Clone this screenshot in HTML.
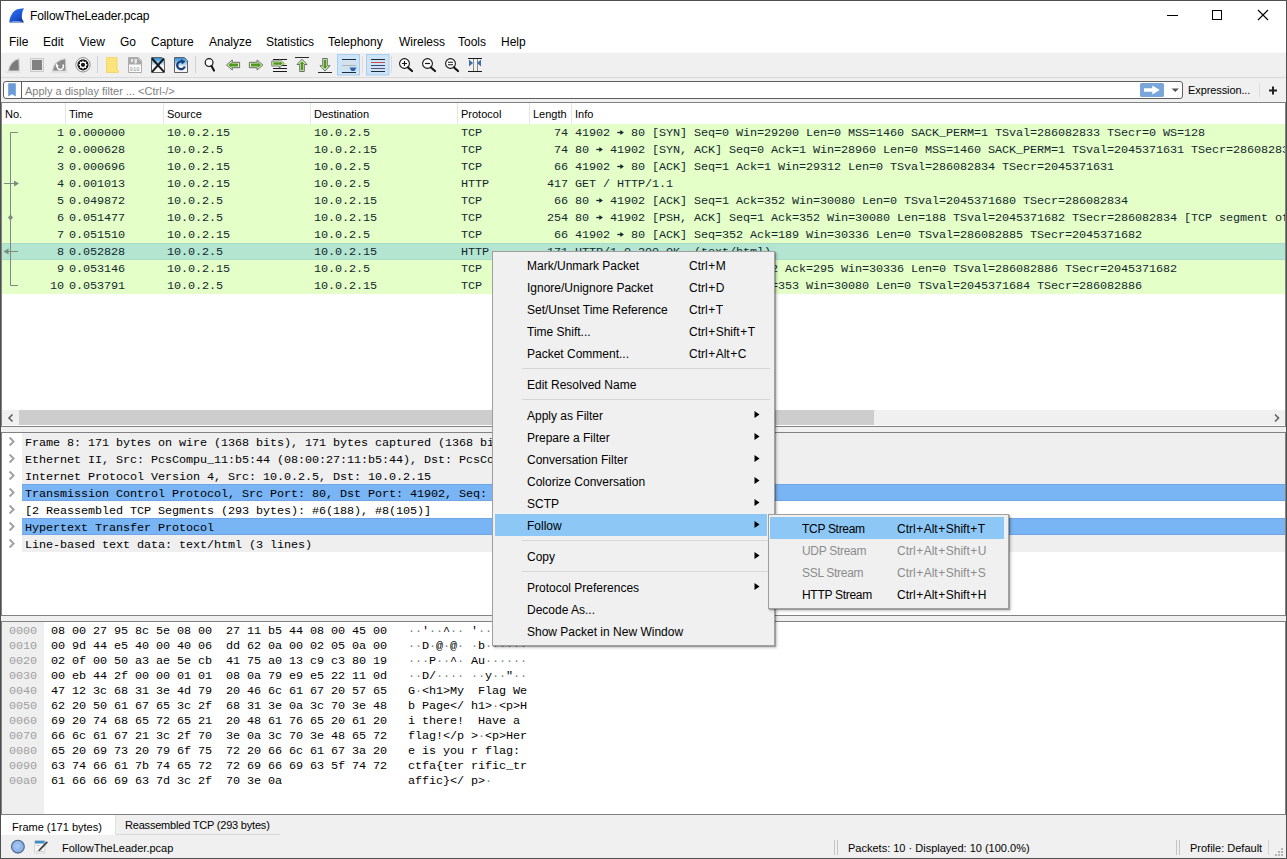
<!DOCTYPE html>
<html><head><meta charset="utf-8">
<style>
*{margin:0;padding:0;box-sizing:border-box}
html,body{width:1287px;height:859px;overflow:hidden;background:#fff}
body{position:relative;font-family:"Liberation Sans",sans-serif;font-size:12px;color:#000}
.a{position:absolute}
.t{position:absolute;white-space:pre;line-height:14px}
.s{font-size:11px}
.m{font-family:"Liberation Mono",monospace;font-size:11.8px;letter-spacing:-0.08px}
.row{position:absolute;left:2px;width:1283px;height:17px;overflow:hidden;background:#e4ffc7;color:#12272e}
.row span{position:absolute;top:1px;line-height:17px;white-space:pre;font-family:"Liberation Mono",monospace;font-size:11.8px;letter-spacing:-0.08px}
.hd{position:absolute;top:103px;height:21px;border-left:1px solid #e5e5e5}
.drow{position:absolute;left:22px;width:1263px;height:17px;background:#efefef;color:#000;font-family:"Liberation Mono",monospace;font-size:11.8px;letter-spacing:-0.08px;line-height:17px;white-space:pre;padding:2px 0 0 3px}
.chev{position:absolute;left:9px}
i.p{font-style:normal;margin:0 0.5px}
b.d{font-weight:normal;color:#808080}
svg.ar{vertical-align:0.5px}
.mi{position:absolute;left:495px;width:272px;height:22px;line-height:22px}
.mi span{position:absolute;white-space:pre}
</style></head><body>

<div class="a" style="left:0;top:0;width:1287px;height:52px;background:#fff"></div>
<div class="t" style="left:30px;top:9px;letter-spacing:-0.1px">FollowTheLeader.pcap</div>
<div class="t" style="left:9px;top:35px">File</div>
<div class="t" style="left:43px;top:35px">Edit</div>
<div class="t" style="left:79px;top:35px">View</div>
<div class="t" style="left:120px;top:35px">Go</div>
<div class="t" style="left:151px;top:35px">Capture</div>
<div class="t" style="left:209px;top:35px">Analyze</div>
<div class="t" style="left:266px;top:35px">Statistics</div>
<div class="t" style="left:328px;top:35px">Telephony</div>
<div class="t" style="left:399px;top:35px">Wireless</div>
<div class="t" style="left:458px;top:35px">Tools</div>
<div class="t" style="left:501px;top:35px">Help</div>
<div class="a" style="left:0;top:52px;width:1287px;height:50px;background:#f0f0f0"></div>
<div class="a" style="left:3px;top:81px;width:1180px;height:18px;background:#fff;border:1px solid #5f5f5f;border-radius:3px"></div>
<div class="t s" style="left:25px;top:84px;color:#7f7f7f">Apply a display filter ... &lt;Ctrl-/&gt;</div>
<div class="t s" style="left:1188px;top:83px;letter-spacing:-0.1px">Expression...</div>
<svg class="a" style="left:0;top:0" width="1287" height="110" viewBox="0 0 1287 110">
<defs>
<linearGradient id="gb" x1="0" y1="0" x2="0" y2="1"><stop offset="0" stop-color="#2f8fd8"/><stop offset="1" stop-color="#d8ecf8"/></linearGradient>
<linearGradient id="fin" x1="0.2" y1="0" x2="0.9" y2="1"><stop offset="0" stop-color="#2f74f0"/><stop offset="0.6" stop-color="#1a52d0"/><stop offset="1" stop-color="#0c2f88"/></linearGradient>
</defs>
<!-- title icon: shark fin blue -->
<path d="M9.3 22.5 C9.8 15.5 13.5 10 18.5 9 L24 8.2 C22.2 11 21.6 15.5 21.9 18.5 L24 22.5 Z" fill="url(#fin)"/>
<path d="M9.5 22.5 C12 20.6 19 20.4 23.6 22.5 Z" fill="#8eaee6" opacity="0.85"/>
<!-- window controls -->
<line x1="1167" y1="15.5" x2="1178" y2="15.5" stroke="#000" stroke-width="1"/>
<rect x="1212.5" y="10.5" width="9" height="9" fill="none" stroke="#000" stroke-width="1"/>
<path d="M1258 10 L1268 20 M1268 10 L1258 20" stroke="#000" stroke-width="1.1"/>
<!-- toolbar lines -->
<line x1="0" y1="52.5" x2="1287" y2="52.5" stroke="#fafafa"/>
<line x1="0" y1="77.5" x2="1287" y2="77.5" stroke="#d9d9d9"/>
<!-- 1 shark fin gray -->
<path d="M8.5 71 C9 65 13 60 19 58.8 L19.3 71 Z" fill="#7b7b7b" stroke="#d3d3d3" stroke-width="1.1" stroke-linejoin="round"/>
<line x1="6" y1="72.2" x2="21" y2="72.2" stroke="#dedede" stroke-width="1"/>
<!-- 2 stop -->
<rect x="30.5" y="58.5" width="13" height="13" fill="#e9e9e9" stroke="#cbcbcb"/>
<rect x="32" y="60" width="10" height="10" fill="#828282"/>
<!-- 3 restart -->
<path d="M52.5 71 C53 65 57 60 65.5 58.8 L66 71 Z" fill="#8a8a8a" stroke="#d3d3d3" stroke-width="1.1" stroke-linejoin="round"/>
<line x1="50" y1="72.2" x2="68" y2="72.2" stroke="#dedede" stroke-width="1"/>
<path d="M62.8 64.5 A3.2 3.2 0 1 1 57.2 65.5" fill="none" stroke="#fff" stroke-width="1.5"/>
<path d="M56 63 L58.8 66 L55.8 67.2 Z" fill="#fff"/>
<!-- 4 options gear -->
<circle cx="83" cy="64.8" r="7.2" fill="#fff" stroke="#8c8c8c" stroke-width="1"/>
<circle cx="83" cy="64.8" r="5.6" fill="#151515"/>
<path d="M83 60.2 L84.1 61.9 L86.3 61.5 L85.9 63.7 L87.6 64.8 L85.9 65.9 L86.3 68.1 L84.1 67.7 L83 69.4 L81.9 67.7 L79.7 68.1 L80.1 65.9 L78.4 64.8 L80.1 63.7 L79.7 61.5 L81.9 61.9 Z" fill="#fff"/>
<circle cx="83" cy="64.8" r="2.1" fill="#151515"/>
<!-- sep -->
<line x1="97.5" y1="56" x2="97.5" y2="73" stroke="#cfd0dc"/>
<!-- 5 folder -->
<path d="M106.5 57.5 H117 V69 L118.5 71 V72.5 H106.5 Z" fill="#fce37a" stroke="#f2d35a" stroke-width="0.8"/>
<!-- 6 save -->
<path d="M128.5 57.5 H138.5 L141.5 60.5 V72.5 H128.5 Z" fill="#fdfdfd" stroke="#acacac"/>
<path d="M129 58 H138 L141 61 V64.5 H129 Z" fill="#a9a9a9"/>
<path d="M131 59 H133 V62 H131 Z M134.5 59 H137 V62.5 L136 63.5 H134.5 Z" fill="#e8e8e8"/>
<text x="129.6" y="70.6" font-family="Liberation Mono" font-size="5.6" fill="#8f8f8f">010</text>
<!-- 7 close -->
<path d="M151.5 57.5 H162 L164.5 60 V72.5 H151.5 Z" fill="#f7f7f7" stroke="#606060"/>
<path d="M152 58 H162 L164 60 V65 H152 Z" fill="url(#gb)"/>
<path d="M152.5 59 L163.5 71.3 M163.5 59 L152.5 71.3" stroke="#161616" stroke-width="1.9" stroke-linecap="round"/>
<!-- 8 reload -->
<path d="M174.5 57.5 H184.5 L187.5 60.5 V72.5 H174.5 Z" fill="#f7f7f7" stroke="#606060"/>
<path d="M175 58 H184.5 L187 60.5 V66 H175 Z" fill="url(#gb)"/>
<path d="M184.8 66.5 A3.9 3.9 0 1 1 182.5 61.6" fill="none" stroke="#17407e" stroke-width="2.3"/>
<path d="M180.8 59.3 L185.5 61.2 L182 64.6 Z" fill="#17407e"/>
<!-- sep -->
<line x1="195.5" y1="56" x2="195.5" y2="73" stroke="#cfd0dc"/>
<!-- 9 find -->
<circle cx="209.1" cy="62.6" r="3.9" fill="#fff" stroke="#151515" stroke-width="1.2"/>
<path d="M211.5 66 L214 70.6" stroke="#151515" stroke-width="2.1" stroke-linecap="round"/>
<!-- 10 prev -->
<path d="M226.5 65 L232.3 60 V62.3 H239.6 V67.7 H232.3 V70 Z" fill="#e0f7c8" stroke="#5c5c5c" stroke-width="0.9" stroke-linejoin="round"/>
<path d="M228.3 65 L231.6 62.3 V63.6 H238 V66.4 H231.6 V67.7 Z" fill="#4e9a1e"/>
<!-- 11 next -->
<path d="M262.9 65 L257.1 60 V62.3 H249.4 V67.7 H257.1 V70 Z" fill="#e0f7c8" stroke="#5c5c5c" stroke-width="0.9" stroke-linejoin="round"/>
<path d="M261.1 65 L257.8 62.3 V63.6 H251 V66.4 H257.8 V67.7 Z" fill="#4e9a1e"/>
<!-- 12 goto -->
<path d="M273 59.5 H287 M279 65.5 H287 M273 68.5 H287 M273 71.5 H287" stroke="#1a1a1a" stroke-width="1"/>
<path d="M284.2 63.5 L279.3 59 V61 H271.8 V66 H279.3 V68 Z" fill="#e0f7c8" stroke="#5c5c5c" stroke-width="0.8" stroke-linejoin="round"/>
<path d="M282.6 63.5 L280 61.3 V62.3 H273.3 V64.7 H280 V65.7 Z" fill="#4e9a1e"/>
<path d="M285 62.5 L287 63.5 L285 64.5 Z" fill="#e8e070"/>
<!-- 13 first -->
<line x1="295" y1="57.5" x2="309" y2="57.5" stroke="#2a2a2a" stroke-width="1"/>
<path d="M302 59.2 L307 64.5 H304.3 V71.5 H299.7 V64.5 H297 Z" fill="#e0f7c8" stroke="#5c5c5c" stroke-width="0.9" stroke-linejoin="round"/>
<path d="M302 61.2 L304.6 64 H303.2 V70.3 H300.8 V64 H299.4 Z" fill="#4e9a1e"/>
<!-- 14 last -->
<line x1="318" y1="72.5" x2="332" y2="72.5" stroke="#2a2a2a" stroke-width="1"/>
<path d="M325 71 L330 65.7 H327.3 V58.5 H322.7 V65.7 H320 Z" fill="#e0f7c8" stroke="#5c5c5c" stroke-width="0.9" stroke-linejoin="round"/>
<path d="M325 69 L327.6 66.2 H326.2 V59.7 H323.8 V66.2 H322.4 Z" fill="#4e9a1e"/>
<!-- 15 autoscroll pressed -->
<rect x="337.5" y="54.5" width="22" height="20.5" fill="#cce4f7" stroke="#a8cdf0"/>
<path d="M342 59.5 H356" stroke="#1f2a3a"/>
<path d="M342 62.5 H356" stroke="#e2dcd4"/>
<path d="M342 65.5 H356" stroke="#b8b0a8"/>
<path d="M342 68.5 H350" stroke="#d8e0c8"/>
<path d="M342 72.5 H356" stroke="#1f2a3a"/>
<path d="M349.5 67.5 H356.5 L354.5 71 H351.5 Z" fill="#2f5faa"/>
<!-- sep -->
<line x1="362.5" y1="56" x2="362.5" y2="73" stroke="#e6d8d0"/>
<!-- 16 colorize pressed -->
<rect x="366.5" y="54.5" width="22.5" height="20.5" fill="#cce4f7" stroke="#a8cdf0"/>
<path d="M371 59.5 H385" stroke="#1f2a3a"/>
<path d="M371 62.5 H385" stroke="#d04a4a"/>
<path d="M371 65.5 H385" stroke="#3a4a7a"/>
<path d="M371 68.5 H385" stroke="#6a4a7a"/>
<path d="M371 71.5 H385" stroke="#1f2a3a"/>
<!-- sep -->
<line x1="391.5" y1="56" x2="391.5" y2="73" stroke="#d8dce6"/>
<!-- 17 zoom in -->
<circle cx="404.5" cy="63.5" r="4.9" fill="#fff" stroke="#151515" stroke-width="1.1"/>
<path d="M402 63.5 H407 M404.5 61 V66" stroke="#151515" stroke-width="1.2"/>
<path d="M408 67.5 L412 71" stroke="#151515" stroke-width="2.2" stroke-linecap="round"/>
<!-- 18 zoom out -->
<circle cx="427.5" cy="63.5" r="4.9" fill="#fff" stroke="#151515" stroke-width="1.1"/>
<path d="M425 63.5 H430" stroke="#151515" stroke-width="1.2"/>
<path d="M431 67.5 L435 71" stroke="#151515" stroke-width="2.2" stroke-linecap="round"/>
<!-- 19 normal -->
<circle cx="450.5" cy="63.5" r="4.9" fill="#fff" stroke="#151515" stroke-width="1.1"/>
<path d="M448 62.3 H453 M448 64.7 H453" stroke="#151515" stroke-width="1.1"/>
<path d="M454 67.5 L458 71" stroke="#151515" stroke-width="2.2" stroke-linecap="round"/>
<!-- 20 resize columns -->
<path d="M468 58.5 H482 M468 71.5 H482" stroke="#1a1a1a" stroke-width="1"/>
<path d="M473.5 59 V71 M477.5 59 V71" stroke="#8a8a7a" stroke-width="1"/>
<path d="M469 59.5 L473 63 L469 66.5 Z M481 59.5 L477 63 L481 66.5 Z" fill="#3f6fb0"/>
<!-- filter bar -->
<line x1="21.5" y1="82" x2="21.5" y2="98" stroke="#5f5f5f"/>
<path d="M8.2 83.3 H15.8 V96.6 L12 94.3 L8.2 96.6 Z" fill="#6b9bd8"/>
<rect x="1140" y="83" width="24" height="14" rx="1.5" fill="#79a6db"/>
<path d="M1144 88.2 H1152.3 V85.6 L1159.8 90 L1152.3 94.4 V91.8 H1144 Z" fill="#fff"/>
<path d="M1171.5 88.5 H1179 L1175.25 92 Z" fill="#555"/>
<line x1="1259.5" y1="83" x2="1259.5" y2="97" stroke="#dcdcdc"/>
<path d="M1273 86.5 V94.5 M1269 90.5 H1277" stroke="#222" stroke-width="2"/>
</svg>

<div class="a" style="left:1px;top:102px;width:1285px;height:325px;background:#fff;border:1px solid #828282"></div>
<div class="t s" style="left:5px;top:107px">No.</div>
<div class="hd" style="left:65px;width:1px"></div>
<div class="t s" style="left:69px;top:107px">Time</div>
<div class="hd" style="left:163px;width:1px"></div>
<div class="t s" style="left:167px;top:107px">Source</div>
<div class="hd" style="left:310px;width:1px"></div>
<div class="t s" style="left:314px;top:107px">Destination</div>
<div class="hd" style="left:457px;width:1px"></div>
<div class="t s" style="left:461px;top:107px">Protocol</div>
<div class="hd" style="left:529px;width:1px"></div>
<div class="t s" style="left:533px;top:107px">Length</div>
<div class="hd" style="left:571px;width:1px"></div>
<div class="t s" style="left:575px;top:107px">Info</div>
<div class="row" style="top:124px;">
<span style="right:1221px">1</span>
<span style="left:67px">0.000000</span>
<span style="left:165px">10.0.2.15</span>
<span style="left:312px">10.0.2.5</span>
<span style="left:459px">TCP</span>
<span style="right:717px">74</span>
<span style="left:573px">41902 <svg class=ar width="7" height="7" viewBox="0 0 7 7"><path d="M0.3 3.5 H4.5" stroke="#12272e" stroke-width="1.3"/><path d="M3.3 0.9 L6.9 3.5 L3.3 6.1 Z" fill="#12272e"/></svg> 80 [SYN] Seq=0 Win=29200 Len=0 MSS=1460 SACK_PERM=1 TSval=286082833 TSecr=0 WS=128</span>
</div>
<div class="row" style="top:141px;">
<span style="right:1221px">2</span>
<span style="left:67px">0.000628</span>
<span style="left:165px">10.0.2.5</span>
<span style="left:312px">10.0.2.15</span>
<span style="left:459px">TCP</span>
<span style="right:717px">74</span>
<span style="left:573px">80 <svg class=ar width="7" height="7" viewBox="0 0 7 7"><path d="M0.3 3.5 H4.5" stroke="#12272e" stroke-width="1.3"/><path d="M3.3 0.9 L6.9 3.5 L3.3 6.1 Z" fill="#12272e"/></svg> 41902 [SYN, ACK] Seq=0 Ack=1 Win=28960 Len=0 MSS=1460 SACK_PERM=1 TSval=2045371631 TSecr=286082833</span>
</div>
<div class="row" style="top:158px;">
<span style="right:1221px">3</span>
<span style="left:67px">0.000696</span>
<span style="left:165px">10.0.2.15</span>
<span style="left:312px">10.0.2.5</span>
<span style="left:459px">TCP</span>
<span style="right:717px">66</span>
<span style="left:573px">41902 <svg class=ar width="7" height="7" viewBox="0 0 7 7"><path d="M0.3 3.5 H4.5" stroke="#12272e" stroke-width="1.3"/><path d="M3.3 0.9 L6.9 3.5 L3.3 6.1 Z" fill="#12272e"/></svg> 80 [ACK] Seq=1 Ack=1 Win=29312 Len=0 TSval=286082834 TSecr=2045371631</span>
</div>
<div class="row" style="top:175px;">
<span style="right:1221px">4</span>
<span style="left:67px">0.001013</span>
<span style="left:165px">10.0.2.15</span>
<span style="left:312px">10.0.2.5</span>
<span style="left:459px">HTTP</span>
<span style="right:717px">417</span>
<span style="left:573px">GET / HTTP/1.1</span>
</div>
<div class="row" style="top:192px;">
<span style="right:1221px">5</span>
<span style="left:67px">0.049872</span>
<span style="left:165px">10.0.2.5</span>
<span style="left:312px">10.0.2.15</span>
<span style="left:459px">TCP</span>
<span style="right:717px">66</span>
<span style="left:573px">80 <svg class=ar width="7" height="7" viewBox="0 0 7 7"><path d="M0.3 3.5 H4.5" stroke="#12272e" stroke-width="1.3"/><path d="M3.3 0.9 L6.9 3.5 L3.3 6.1 Z" fill="#12272e"/></svg> 41902 [ACK] Seq=1 Ack=352 Win=30080 Len=0 TSval=2045371680 TSecr=286082834</span>
</div>
<div class="row" style="top:209px;">
<span style="right:1221px">6</span>
<span style="left:67px">0.051477</span>
<span style="left:165px">10.0.2.5</span>
<span style="left:312px">10.0.2.15</span>
<span style="left:459px">TCP</span>
<span style="right:717px">254</span>
<span style="left:573px">80 <svg class=ar width="7" height="7" viewBox="0 0 7 7"><path d="M0.3 3.5 H4.5" stroke="#12272e" stroke-width="1.3"/><path d="M3.3 0.9 L6.9 3.5 L3.3 6.1 Z" fill="#12272e"/></svg> 41902 [PSH, ACK] Seq=1 Ack=352 Win=30080 Len=188 TSval=2045371682 TSecr=286082834 [TCP segment of a reassembled PDU]</span>
</div>
<div class="row" style="top:226px;">
<span style="right:1221px">7</span>
<span style="left:67px">0.051510</span>
<span style="left:165px">10.0.2.15</span>
<span style="left:312px">10.0.2.5</span>
<span style="left:459px">TCP</span>
<span style="right:717px">66</span>
<span style="left:573px">41902 <svg class=ar width="7" height="7" viewBox="0 0 7 7"><path d="M0.3 3.5 H4.5" stroke="#12272e" stroke-width="1.3"/><path d="M3.3 0.9 L6.9 3.5 L3.3 6.1 Z" fill="#12272e"/></svg> 80 [ACK] Seq=352 Ack=189 Win=30336 Len=0 TSval=286082885 TSecr=2045371682</span>
</div>
<div class="row" style="top:243px;background:#b3e5d1;box-shadow:inset 0 1px 0 #a9dbc6,inset 0 -1px 0 #a9dbc6;">
<span style="right:1221px">8</span>
<span style="left:67px">0.052828</span>
<span style="left:165px">10.0.2.5</span>
<span style="left:312px">10.0.2.15</span>
<span style="left:459px">HTTP</span>
<span style="right:717px">171</span>
<span style="left:573px">HTTP/1.0 200 OK  (text/html)</span>
</div>
<div class="row" style="top:260px;">
<span style="right:1221px">9</span>
<span style="left:67px">0.053146</span>
<span style="left:165px">10.0.2.15</span>
<span style="left:312px">10.0.2.5</span>
<span style="left:459px">TCP</span>
<span style="right:717px">66</span>
<span style="left:573px">41902 <svg class=ar width="7" height="7" viewBox="0 0 7 7"><path d="M0.3 3.5 H4.5" stroke="#12272e" stroke-width="1.3"/><path d="M3.3 0.9 L6.9 3.5 L3.3 6.1 Z" fill="#12272e"/></svg> 80 [FIN, ACK] Seq=352 Ack=295 Win=30336 Len=0 TSval=286082886 TSecr=2045371682</span>
</div>
<div class="row" style="top:277px;">
<span style="right:1221px">10</span>
<span style="left:67px">0.053791</span>
<span style="left:165px">10.0.2.5</span>
<span style="left:312px">10.0.2.15</span>
<span style="left:459px">TCP</span>
<span style="right:717px">66</span>
<span style="left:573px">80 <svg class=ar width="7" height="7" viewBox="0 0 7 7"><path d="M0.3 3.5 H4.5" stroke="#12272e" stroke-width="1.3"/><path d="M3.3 0.9 L6.9 3.5 L3.3 6.1 Z" fill="#12272e"/></svg> 41902 [ACK] Seq=295 Ack=353 Win=30080 Len=0 TSval=2045371684 TSecr=286082886</span>
</div>
<svg class="a" style="left:0;top:120px" width="30" height="180" viewBox="0 120 30 180">
<path d="M18 132.5 H10.5 V285.5 H18" fill="none" stroke="#7d8a7d" stroke-width="1"/>
<path d="M4 183.5 H14" stroke="#7d8a7d" stroke-width="1"/>
<path d="M14 180.5 L19 183.5 L14 186.5 Z" fill="#7d8a7d"/>
<path d="M10.5 214.5 L13 217.5 L10.5 220.5 L8 217.5 Z" fill="#7d8a7d"/>
<path d="M8 251.5 H18" stroke="#7d8a7d" stroke-width="1"/>
<path d="M8.5 248.5 L3.5 251.5 L8.5 254.5 Z" fill="#7d8a7d"/>
</svg>
<div class="a" style="left:2px;top:410px;width:1283px;height:15px;background:#f0f0f0"></div>
<div class="a" style="left:19px;top:410px;width:855px;height:15px;background:#cdcdcd"></div>
<svg class="a" style="left:0;top:405px" width="1287" height="25" viewBox="0 405 1287 25">
<path d="M12.5 414.5 L9 418 L12.5 421.5" fill="none" stroke="#606060" stroke-width="1.6"/>
<path d="M1275 414.5 L1278.5 418 L1275 421.5" fill="none" stroke="#606060" stroke-width="1.6"/>
</svg>
<div class="a" style="left:0;top:427px;width:1287px;height:5px;background:#f0f0f0"></div>
<div class="a" style="left:1px;top:432px;width:1285px;height:184px;background:#fff;border:1px solid #828282"></div>
<div class="drow" style="top:433px;background:#efefef">Frame 8: 171 bytes on wire (1368 bits), 171 bytes captured (1368 bits) on interface 0</div>
<div class="drow" style="top:450px;background:#efefef">Ethernet II, Src: PcsCompu_11:b5:44 (08:00:27:11:b5:44), Dst: PcsCompu_95:8c:5e (08:00:27:95:8c:5e)</div>
<div class="drow" style="top:467px;background:#efefef">Internet Protocol Version 4, Src: 10.0.2.5, Dst: 10.0.2.15</div>
<div class="drow" style="top:484px;background:#79b4f5;box-shadow:inset 0 1px 0 #70a6e6,inset 0 -1px 0 #70a6e6">Transmission Control Protocol, Src Port: 80, Dst Port: 41902, Seq: 189, Ack: 352, Len: 105</div>
<div class="drow" style="top:501px;background:#ffffff">[2 Reassembled TCP Segments (293 bytes): #6(188), #8(105)]</div>
<div class="drow" style="top:518px;background:#79b4f5;box-shadow:inset 0 1px 0 #70a6e6,inset 0 -1px 0 #70a6e6">Hypertext Transfer Protocol</div>
<div class="drow" style="top:535px;background:#efefef">Line-based text data: text/html (3 lines)</div>
<svg class="a" style="left:0;top:433px" width="22" height="120" viewBox="0 433 22 120">
<path d="M9.6 437.5 L13.6 441.5 L9.6 445.5" fill="none" stroke="#a0a0a0" stroke-width="1.9"/>
<path d="M9.6 454.5 L13.6 458.5 L9.6 462.5" fill="none" stroke="#a0a0a0" stroke-width="1.9"/>
<path d="M9.6 471.5 L13.6 475.5 L9.6 479.5" fill="none" stroke="#a0a0a0" stroke-width="1.9"/>
<path d="M9.6 488.5 L13.6 492.5 L9.6 496.5" fill="none" stroke="#a0a0a0" stroke-width="1.9"/>
<path d="M9.6 505.5 L13.6 509.5 L9.6 513.5" fill="none" stroke="#a0a0a0" stroke-width="1.9"/>
<path d="M9.6 522.5 L13.6 526.5 L9.6 530.5" fill="none" stroke="#a0a0a0" stroke-width="1.9"/>
<path d="M9.6 539.5 L13.6 543.5 L9.6 547.5" fill="none" stroke="#a0a0a0" stroke-width="1.9"/>
</svg>
<div class="a" style="left:0;top:616px;width:1287px;height:5px;background:#f0f0f0"></div>
<div class="a" style="left:1px;top:621px;width:1285px;height:194px;background:#fff;border:1px solid #828282"></div>
<div class="a" style="left:2px;top:622px;width:42px;height:192px;background:#efefef"></div>
<div class="t m" style="left:9px;top:624px;line-height:15px;color:#a0a0a0">0000</div>
<div class="t m" style="left:51px;top:624px;line-height:15px">08 00 27 95 8c 5e 08 00  27 11 b5 44 08 00 45 00</div>
<div class="t m" style="left:408px;top:624px;line-height:15px"><b class=d>·</b><b class=d>·</b>&#x27;<b class=d>·</b><b class=d>·</b>^<b class=d>·</b><b class=d>·</b> &#x27;<b class=d>·</b><b class=d>·</b>D<b class=d>·</b><b class=d>·</b>E<b class=d>·</b></div>
<div class="t m" style="left:9px;top:639px;line-height:15px;color:#a0a0a0">0010</div>
<div class="t m" style="left:51px;top:639px;line-height:15px">00 9d 44 e5 40 00 40 06  dd 62 0a 00 02 05 0a 00</div>
<div class="t m" style="left:408px;top:639px;line-height:15px"><b class=d>·</b><b class=d>·</b>D<b class=d>·</b>@<b class=d>·</b>@<b class=d>·</b> <b class=d>·</b>b<b class=d>·</b><b class=d>·</b><b class=d>·</b><b class=d>·</b><b class=d>·</b><b class=d>·</b></div>
<div class="t m" style="left:9px;top:654px;line-height:15px;color:#a0a0a0">0020</div>
<div class="t m" style="left:51px;top:654px;line-height:15px">02 0f 00 50 a3 ae 5e cb  41 75 a0 13 c9 c3 80 19</div>
<div class="t m" style="left:408px;top:654px;line-height:15px"><b class=d>·</b><b class=d>·</b><b class=d>·</b>P<b class=d>·</b><b class=d>·</b>^<b class=d>·</b> Au<b class=d>·</b><b class=d>·</b><b class=d>·</b><b class=d>·</b><b class=d>·</b><b class=d>·</b></div>
<div class="t m" style="left:9px;top:669px;line-height:15px;color:#a0a0a0">0030</div>
<div class="t m" style="left:51px;top:669px;line-height:15px">00 eb 44 2f 00 00 01 01  08 0a 79 e9 e5 22 11 0d</div>
<div class="t m" style="left:408px;top:669px;line-height:15px"><b class=d>·</b><b class=d>·</b>D/<b class=d>·</b><b class=d>·</b><b class=d>·</b><b class=d>·</b> <b class=d>·</b><b class=d>·</b>y<b class=d>·</b><b class=d>·</b>&quot;<b class=d>·</b><b class=d>·</b></div>
<div class="t m" style="left:9px;top:684px;line-height:15px;color:#a0a0a0">0040</div>
<div class="t m" style="left:51px;top:684px;line-height:15px">47 12 3c 68 31 3e 4d 79  20 46 6c 61 67 20 57 65</div>
<div class="t m" style="left:408px;top:684px;line-height:15px">G<b class=d>·</b>&lt;h1&gt;My  Flag We</div>
<div class="t m" style="left:9px;top:699px;line-height:15px;color:#a0a0a0">0050</div>
<div class="t m" style="left:51px;top:699px;line-height:15px">62 20 50 61 67 65 3c 2f  68 31 3e 0a 3c 70 3e 48</div>
<div class="t m" style="left:408px;top:699px;line-height:15px">b Page&lt;/ h1&gt;<b class=d>·</b>&lt;p&gt;H</div>
<div class="t m" style="left:9px;top:714px;line-height:15px;color:#a0a0a0">0060</div>
<div class="t m" style="left:51px;top:714px;line-height:15px">69 20 74 68 65 72 65 21  20 48 61 76 65 20 61 20</div>
<div class="t m" style="left:408px;top:714px;line-height:15px">i there!  Have a </div>
<div class="t m" style="left:9px;top:729px;line-height:15px;color:#a0a0a0">0070</div>
<div class="t m" style="left:51px;top:729px;line-height:15px">66 6c 61 67 21 3c 2f 70  3e 0a 3c 70 3e 48 65 72</div>
<div class="t m" style="left:408px;top:729px;line-height:15px">flag!&lt;/p &gt;<b class=d>·</b>&lt;p&gt;Her</div>
<div class="t m" style="left:9px;top:744px;line-height:15px;color:#a0a0a0">0080</div>
<div class="t m" style="left:51px;top:744px;line-height:15px">65 20 69 73 20 79 6f 75  72 20 66 6c 61 67 3a 20</div>
<div class="t m" style="left:408px;top:744px;line-height:15px">e is you r flag: </div>
<div class="t m" style="left:9px;top:759px;line-height:15px;color:#a0a0a0">0090</div>
<div class="t m" style="left:51px;top:759px;line-height:15px">63 74 66 61 7b 74 65 72  72 69 66 69 63 5f 74 72</div>
<div class="t m" style="left:408px;top:759px;line-height:15px">ctfa{ter rific_tr</div>
<div class="t m" style="left:9px;top:774px;line-height:15px;color:#a0a0a0">00a0</div>
<div class="t m" style="left:51px;top:774px;line-height:15px">61 66 66 69 63 7d 3c 2f  70 3e 0a</div>
<div class="t m" style="left:408px;top:774px;line-height:15px">affic}&lt;/ p&gt;<b class=d>·</b></div>
<div class="a" style="left:0;top:815px;width:1287px;height:44px;background:#f0f0f0"></div>
<div class="a" style="left:116px;top:834px;width:164px;height:1px;background:#d9d9d9"></div>
<div class="a" style="left:1px;top:815px;width:114px;height:20px;background:#fff"></div>
<div class="t s" style="left:12px;top:820px">Frame (171 bytes)</div>
<div class="a" style="left:115px;top:815px;width:1px;height:20px;background:#e2e2e2"></div>
<div class="t s" style="left:125px;top:818px;letter-spacing:-0.2px">Reassembled TCP (293 bytes)</div>
<svg class="a" style="left:0;top:835px" width="1287" height="24" viewBox="0 835 1287 24">
<defs><radialGradient id="sc" cx="0.45" cy="0.45" r="0.6"><stop offset="0" stop-color="#a9cdf6"/><stop offset="1" stop-color="#7ea6dc"/></radialGradient></defs>
<circle cx="17.9" cy="846.7" r="6.4" fill="url(#sc)" stroke="#4d6488" stroke-width="1.1"/>
<path d="M34.5 840.5 H45 V853.2 H34.5 Z" fill="#f6f6f6" stroke="#cfcfcf" stroke-width="0.8"/>
<path d="M35 840.8 H44.6 V843.5 H35 Z" fill="#3a8fc8"/>
<path d="M36 845.5 H40 M36 851.5 H44" stroke="#c4c4c4" stroke-width="0.8"/>
<path d="M39 849.3 L46.6 841.2 L47.9 842.6 L40.3 850.6 Z" fill="#3f3f3f"/>
<path d="M38.3 851 L39 849.3 L40.3 850.6 Z" fill="#000"/>
<path d="M834.5 840 V855 M837.5 840 V855" stroke="#c4c4c4"/>
<path d="M1176.5 840 V855 M1179.5 840 V855" stroke="#c4c4c4"/>
<path d="M1268.5 840 V855" stroke="#d4d4d4"/>
<g fill="#b4b4b4"><rect x="1281" y="848" width="2" height="2"/><rect x="1278" y="851" width="2" height="2"/><rect x="1281" y="851" width="2" height="2"/><rect x="1275" y="854" width="2" height="2"/><rect x="1278" y="854" width="2" height="2"/><rect x="1281" y="854" width="2" height="2"/></g>
</svg>
<div class="t s" style="left:62px;top:841px">FollowTheLeader.pcap</div>
<div class="t s" style="left:848px;top:841px">Packets: 10 · Displayed: 10 (100.0%)</div>
<div class="t s" style="left:1190px;top:841px">Profile: Default</div>
<div class="a" style="left:492px;top:251px;width:283px;height:395px;background:#f0f0f0;border:1px solid #a0a0a0;box-shadow:1px 1px 1px rgba(0,0,0,0.28),2px 2px 3px rgba(0,0,0,0.18)"></div>
<div class="t" style="left:527px;top:259px">Mark/Unmark Packet</div>
<div class="t" style="left:689px;top:259px">Ctrl<i class=p>+</i>M</div>
<div class="t" style="left:527px;top:281px">Ignore/Unignore Packet</div>
<div class="t" style="left:689px;top:281px">Ctrl<i class=p>+</i>D</div>
<div class="t" style="left:527px;top:303px">Set/Unset Time Reference</div>
<div class="t" style="left:689px;top:303px">Ctrl<i class=p>+</i>T</div>
<div class="t" style="left:527px;top:325px">Time Shift...</div>
<div class="t" style="left:689px;top:325px">Ctrl<i class=p>+</i>Shift<i class=p>+</i>T</div>
<div class="t" style="left:527px;top:347px">Packet Comment...</div>
<div class="t" style="left:689px;top:347px">Ctrl<i class=p>+</i>Alt<i class=p>+</i>C</div>
<div class="a" style="left:522px;top:368px;width:248px;height:1px;background:#d7d7d7"></div>
<div class="t" style="left:527px;top:378px">Edit Resolved Name</div>
<div class="a" style="left:522px;top:399px;width:248px;height:1px;background:#d7d7d7"></div>
<div class="t" style="left:527px;top:409px">Apply as Filter</div>
<div class="t" style="left:527px;top:431px">Prepare a Filter</div>
<div class="t" style="left:527px;top:453px">Conversation Filter</div>
<div class="t" style="left:527px;top:475px">Colorize Conversation</div>
<div class="t" style="left:527px;top:497px">SCTP</div>
<div class="a" style="left:495px;top:514px;width:272px;height:22px;background:#8cc7f6"></div>
<div class="t" style="left:527px;top:519px">Follow</div>
<div class="a" style="left:522px;top:540px;width:248px;height:1px;background:#d7d7d7"></div>
<div class="t" style="left:527px;top:550px">Copy</div>
<div class="a" style="left:522px;top:571px;width:248px;height:1px;background:#d7d7d7"></div>
<div class="t" style="left:527px;top:581px">Protocol Preferences</div>
<div class="t" style="left:527px;top:603px">Decode As...</div>
<div class="t" style="left:527px;top:625px">Show Packet in New Window</div>
<svg class="a" style="left:740px;top:250px" width="30" height="400" viewBox="740 250 30 400">
<path d="M754.5 410.9 L759.5 414.4 L754.5 417.9 Z" fill="#000"/>
<path d="M754.5 432.9 L759.5 436.4 L754.5 439.9 Z" fill="#000"/>
<path d="M754.5 454.9 L759.5 458.4 L754.5 461.9 Z" fill="#000"/>
<path d="M754.5 476.9 L759.5 480.4 L754.5 483.9 Z" fill="#000"/>
<path d="M754.5 498.9 L759.5 502.4 L754.5 505.9 Z" fill="#000"/>
<path d="M754.5 520.9 L759.5 524.4 L754.5 527.9 Z" fill="#000"/>
<path d="M754.5 551.9 L759.5 555.4 L754.5 558.9 Z" fill="#000"/>
<path d="M754.5 582.9 L759.5 586.4 L754.5 589.9 Z" fill="#000"/>
</svg>
<div class="a" style="left:768px;top:514px;width:241px;height:95px;background:#f0f0f0;border:1px solid #a0a0a0;box-shadow:1px 1px 1px rgba(0,0,0,0.28),2px 2px 3px rgba(0,0,0,0.18)"></div>
<div class="a" style="left:770px;top:517px;width:234px;height:22px;background:#8cc7f6"></div>
<div class="t" style="left:802px;top:522px;color:#000;letter-spacing:-0.3px">TCP Stream</div>
<div class="t" style="left:897px;top:522px;color:#000">Ctrl<i class=p>+</i>Alt<i class=p>+</i>Shift<i class=p>+</i>T</div>
<div class="t" style="left:802px;top:544px;color:#8c8c8c;letter-spacing:-0.3px">UDP Stream</div>
<div class="t" style="left:897px;top:544px;color:#8c8c8c">Ctrl<i class=p>+</i>Alt<i class=p>+</i>Shift<i class=p>+</i>U</div>
<div class="t" style="left:802px;top:566px;color:#8c8c8c;letter-spacing:-0.3px">SSL Stream</div>
<div class="t" style="left:897px;top:566px;color:#8c8c8c">Ctrl<i class=p>+</i>Alt<i class=p>+</i>Shift<i class=p>+</i>S</div>
<div class="t" style="left:802px;top:588px;color:#000;letter-spacing:-0.3px">HTTP Stream</div>
<div class="t" style="left:897px;top:588px;color:#000">Ctrl<i class=p>+</i>Alt<i class=p>+</i>Shift<i class=p>+</i>H</div>
<div class="a" style="left:0;top:0;width:1287px;height:859px;border:1px solid #4f4f4f"></div>
</body></html>
